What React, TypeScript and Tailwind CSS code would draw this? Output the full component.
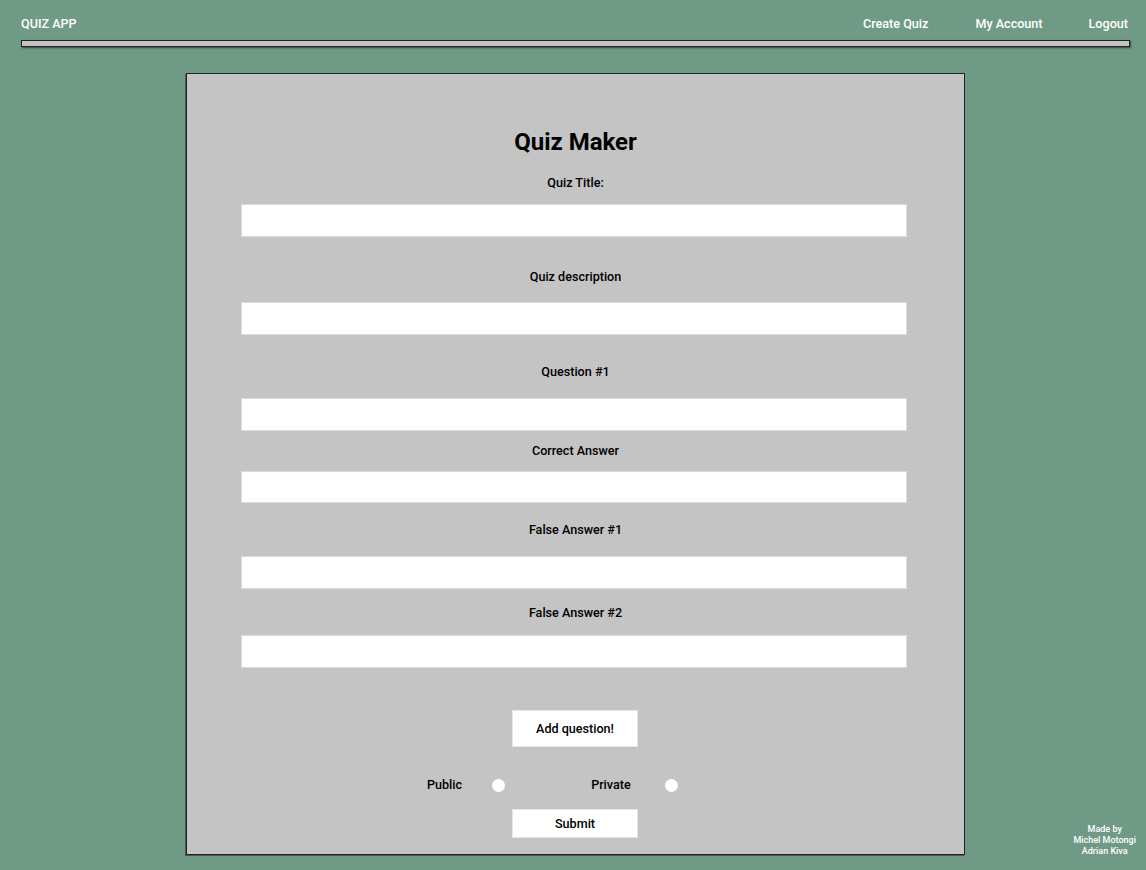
import React from "react";

const font = { fontFamily: "Roboto, 'Liberation Sans', sans-serif" };

const Field = ({ label, labelMt, inputMt, inputH = "h-[33px]" }: { label: string; labelMt: string; inputMt: string; inputH?: string }) => {
  return (
    <>
      <label className={`${labelMt} block text-center text-[12.6px] leading-4 font-medium text-black`}>{label}</label>
      <input
        type="text"
        className={`${inputMt} ${inputH} ml-[54px] block w-[666px] bg-white border border-[#dcdcdc] outline-none px-2 text-sm`}
      />
    </>
  );
};

const Radio = () => <span className="inline-block w-[13px] h-[13px] rounded-full bg-white" />;

export default function App() {
  return (
    <div className="min-h-[870px] w-full bg-[#6f9b86] flex flex-col" style={font}>
      {/* top nav */}
      <div className="pt-[16px] pl-[21px] pr-[18px]">
        <div className="flex items-center justify-between h-4 text-[12.6px] leading-4 font-medium text-white">
          <span>QUIZ APP</span>
          <div className="flex items-center">
            <span>Create Quiz</span>
            <span className="ml-[47px]">My Account</span>
            <span className="ml-[46px]">Logout</span>
          </div>
        </div>
      </div>
      <div className="mt-[8px] ml-[21px] mr-[16px] h-[7px] bg-[#c4c4c4] border border-[#222] shadow-[1px_1px_2px_rgba(0,0,0,0.55)]" />

      <div className="flex items-end mt-[26px]">
        {/* card */}
        <div className="ml-[186px] w-[779px] h-[782px] bg-[#c4c4c4] border border-[#222] shadow-[-1px_1px_0_#555] flex flex-col">
          <h1 className="mt-[54px] text-center text-[24px] leading-7 font-bold text-black">Quiz Maker</h1>
          <Field label="Quiz Title:" labelMt="mt-[19px]" inputMt="mt-[13px]" />
          <Field label="Quiz description" labelMt="mt-[32px]" inputMt="mt-[17px]" />
          <Field label="Question #1" labelMt="mt-[29px]" inputMt="mt-[18px]" />
          <Field label="Correct Answer" labelMt="mt-[12px]" inputMt="mt-[12px]" inputH="h-[32px]" />
          <Field label="False Answer #1" labelMt="mt-[19px]" inputMt="mt-[18px]" />
          <Field label="False Answer #2" labelMt="mt-[16px]" inputMt="mt-[14px]" />

          <button className="mt-[42px] ml-[325px] w-[126px] h-[37px] pt-[2px] bg-white border border-[#e6e6e6] text-[12.6px] font-medium text-black">
            Add question!
          </button>

          <div className="mt-[30px] h-4 flex items-center pl-[240px] text-[12.6px] leading-4 font-medium text-black">
            <span>Public</span>
            <span className="ml-[30px] flex"><Radio /></span>
            <span className="ml-[86px]">Private</span>
            <span className="ml-[34px] flex"><Radio /></span>
          </div>

          <button className="mt-[16px] ml-[325px] w-[126px] h-[29px] pt-[2px] bg-white border border-[#e6e6e6] text-[12.6px] font-medium text-black">
            Submit
          </button>
        </div>

        {/* credits */}
        <div className="ml-auto mr-[10px] mb-[-2px] text-center text-[9px] leading-[11px] font-medium text-white">
          <div>Made by</div>
          <div>Michel Motongi</div>
          <div>Adrian Kiva</div>
        </div>
      </div>
    </div>
  );
}
